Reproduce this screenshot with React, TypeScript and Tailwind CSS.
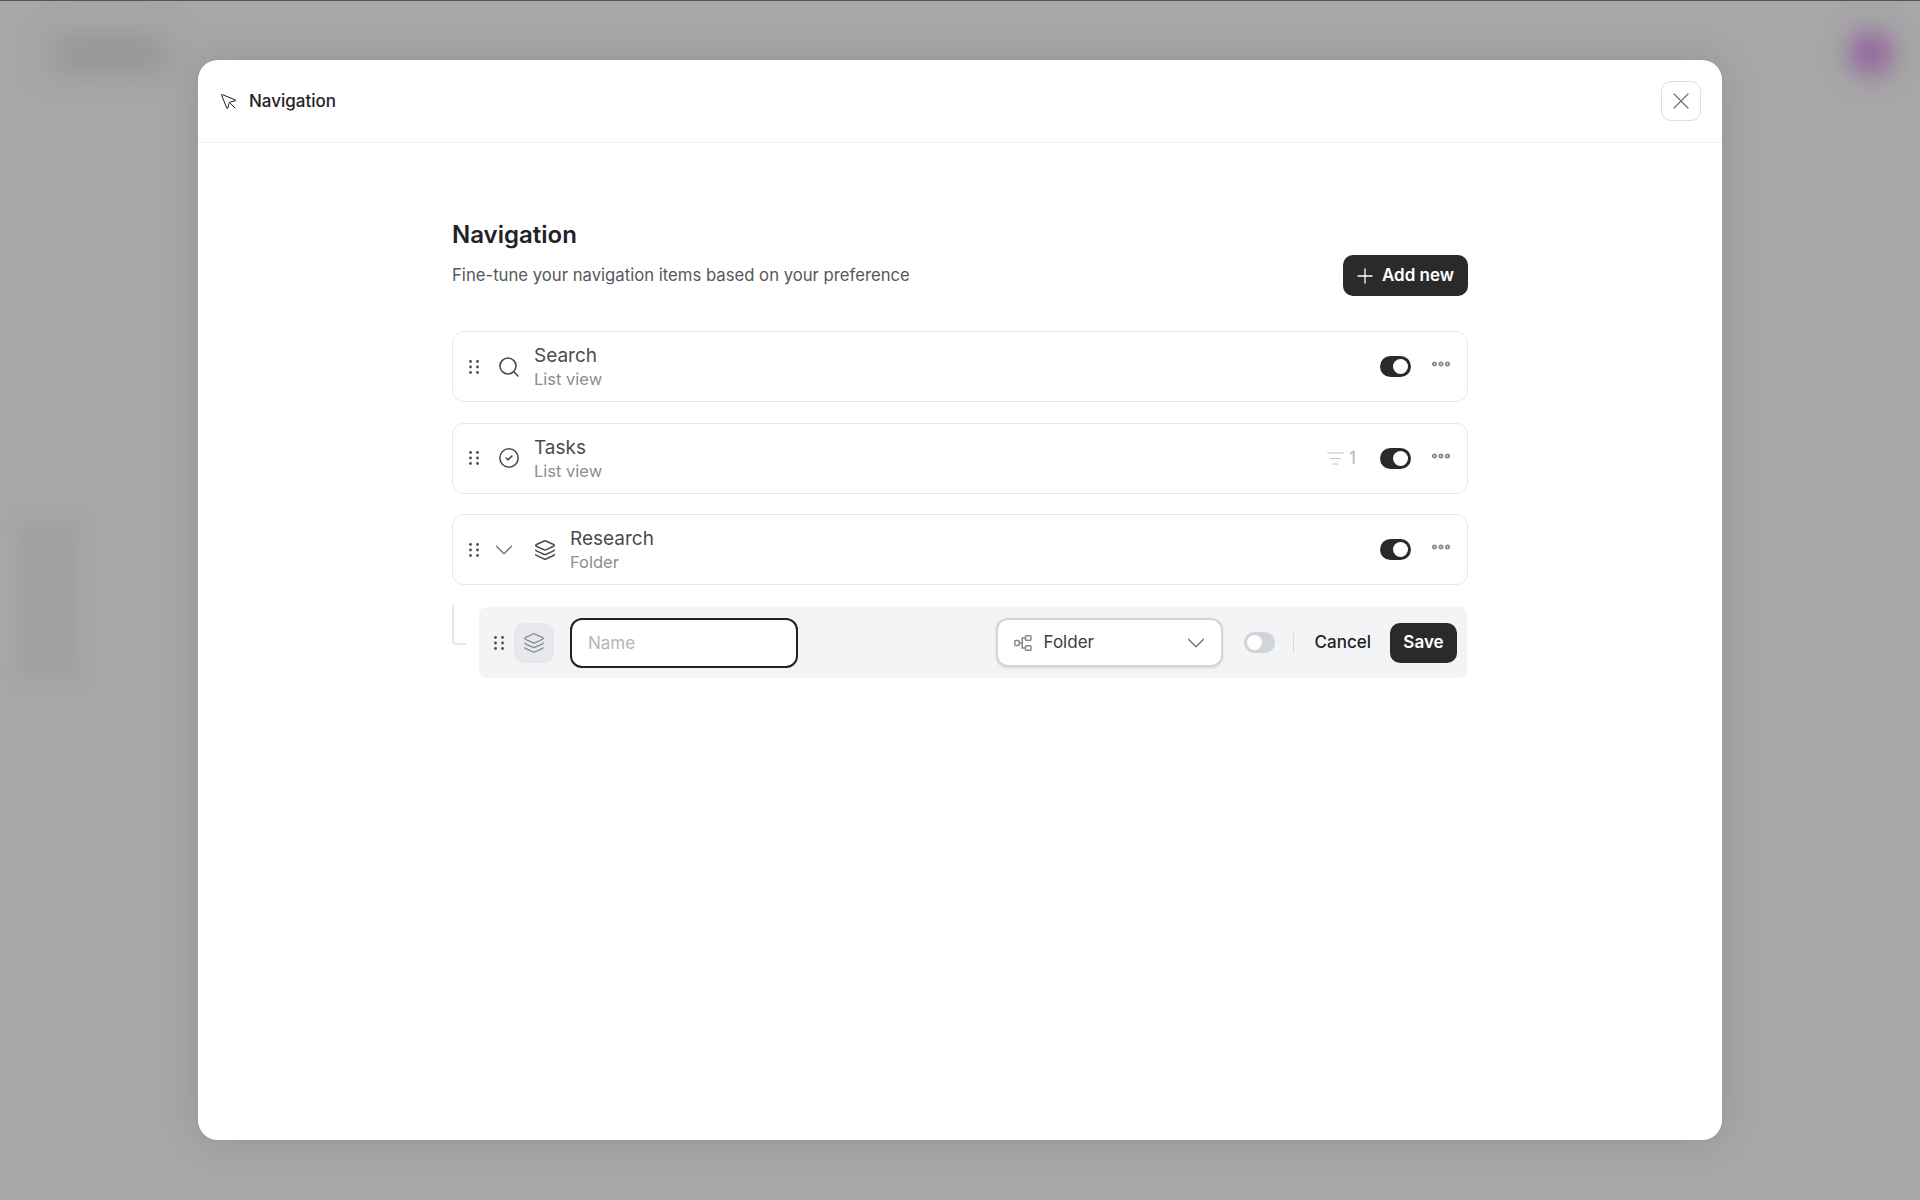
import React from 'react';
import { ChevronDown, CircleCheck, Layers, ListFilter, MousePointer, Plus, Search, X } from 'lucide-react';

const GripDots = () => (
  <svg width="10" height="14" viewBox="0 0 10 14" className="shrink-0 text-[#4b4f55]" fill="currentColor">
    <circle cx="1.5" cy="1.5" r="1.4" />
    <circle cx="8.5" cy="1.5" r="1.4" />
    <circle cx="1.5" cy="7" r="1.4" />
    <circle cx="8.5" cy="7" r="1.4" />
    <circle cx="1.5" cy="12.5" r="1.4" />
    <circle cx="8.5" cy="12.5" r="1.4" />
  </svg>
);

const MoreDots = () => (
  <svg width="20" height="8" viewBox="0 0 20 8" fill="none" stroke="#85898f" strokeWidth="1.8" className="mb-[5px]">
    <circle cx="3.5" cy="4" r="1.7" />
    <circle cx="10" cy="4" r="1.7" />
    <circle cx="16.5" cy="4" r="1.7" />
  </svg>
);

const FolderTree = () => (
  <svg width="18" height="16" viewBox="0 0 18 16" fill="none" stroke="#85898f" strokeWidth="1.5">
    <rect x="0.8" y="5.6" width="4.4" height="4.8" rx="0.8" />
    <rect x="11.5" y="0.8" width="5.5" height="4.4" rx="0.8" />
    <rect x="11.5" y="10.8" width="5.5" height="4.4" rx="0.8" />
    <path d="M5.2 8H8.2V3H11.5M8.2 8V13H11.5" />
  </svg>
);

const Toggle = () => (
  <div className="flex h-[21px] w-[31px] items-center justify-end rounded-full bg-[#2a2a2b] pr-[3px]">
    <div className="h-[15px] w-[15px] rounded-full bg-white" />
  </div>
);

type RowProps = {
  title: string;
  subtitle: string;
  icon: React.ReactNode;
  expandable?: boolean;
  filterCount?: number;
};

const NavRow = ({ title, subtitle, icon, expandable, filterCount }: RowProps) => (
  <div className="flex h-[71px] items-center rounded-xl border border-[#e6e7e9] bg-white pl-4 pr-4">
    <GripDots />
    {expandable && <ChevronDown size={30} strokeWidth={1} className="ml-[10px] text-[#6b7076]" />}
    <div className={expandable ? 'ml-[15px] flex w-[22px] justify-center' : 'ml-[18px] flex w-6 justify-center'}>{icon}</div>
    <div className={expandable ? 'ml-[14px] flex flex-col' : 'ml-[13px] flex flex-col'}>
      <span className="text-[19px] leading-[25px] text-[#4a4c50]">{title}</span>
      <span className="text-[16.5px] leading-[22px] text-[#8b8e93]">{subtitle}</span>
    </div>
    <div className="ml-auto flex items-center">
      {filterCount !== undefined && (
        <div className="mr-6 flex items-center gap-1 text-[#b2b5b9]">
          <ListFilter size={19} strokeWidth={1.1} />
          <span className="text-[17px] leading-none">{filterCount}</span>
        </div>
      )}
      <Toggle />
      <div className="ml-5 flex w-5 items-center">
        <MoreDots />
      </div>
    </div>
  </div>
);

const App = () => {
  return (
    <div className="relative h-[1200px] w-full overflow-hidden bg-[#a7a7a7] font-['Inter',sans-serif]">
      {/* blurred page behind the dialog */}
      <div className="absolute inset-x-0 top-0 h-px bg-[#555]" />
      <div className="absolute left-[50px] top-[40px] h-[28px] w-[120px] rounded-full bg-[#8f8f8f] blur-[16px]" />
      <div className="absolute left-[20px] top-[520px] h-[160px] w-[58px] rounded-lg bg-[#a0a0a0] blur-[8px]" />
      <div className="absolute left-[1848px] top-[30px] h-[46px] w-[46px] rounded-full bg-[#93689e] blur-[12px]" />

      <div className="absolute inset-0 flex items-center justify-center">
        <div className="flex h-[1080px] w-[1524px] flex-col rounded-[20px] bg-white shadow-[0_0_40px_rgba(0,0,0,0.12)]">
          <header className="flex h-[83px] shrink-0 items-center justify-between border-b border-[#eeeff0] pl-[21px] pr-[21px]">
            <div className="flex items-center gap-[10px] pt-[2px]">
              <MousePointer size={20} strokeWidth={1.2} className="text-[#1f1f20]" />
              <span className="text-[17px] font-medium text-[#232325]">Navigation</span>
            </div>
            <button className="flex h-10 w-10 items-center justify-center rounded-[10px] border border-[#dcdde0] bg-white text-[#6f7378]">
              <X size={28} strokeWidth={1.1} />
            </button>
          </header>

          <main className="mx-auto w-[1016px] pt-[74px]">
            <div className="flex items-end justify-between">
              <div>
                <h1 className="text-[24px] font-semibold leading-[36px] text-[#222224]">Navigation</h1>
                <p className="mt-[10px] pb-[9px] text-[16.7px] leading-[24px] text-[#55585c]">
                  Fine-tune your navigation items based on your preference
                </p>
              </div>
              <button className="flex h-[41px] w-[125px] items-center gap-[5px] rounded-[10px] bg-[#2a2a2b] pl-[10px] text-[17px] font-semibold text-white">
                <Plus size={24} strokeWidth={1.3} />
                Add new
              </button>
            </div>

            <div className="mt-[35px] flex flex-col gap-[20.5px]">
              <NavRow title="Search" subtitle="List view" icon={<Search size={24} strokeWidth={1.6} className="text-[#4a4c50]" />} />
              <NavRow
                title="Tasks"
                subtitle="List view"
                filterCount={1}
                icon={<CircleCheck size={22} strokeWidth={1.7} className="text-[#4a4c50]" />}
              />
              <NavRow title="Research" subtitle="Folder" expandable icon={<Layers size={22} strokeWidth={1.7} className="text-[#4a4c50]" />} />
            </div>

            <div className="mt-5 flex items-start">
              <div className="h-[40px] w-[14px] shrink-0 rounded-bl-sm border-b-2 border-l-2 border-[#e6e7e9]" />
              <div className="ml-[13px] mr-px mt-[2px] flex h-[71px] flex-1 items-center rounded-lg bg-[#f2f4f6] pl-[15px] pr-[10px]">
                <GripDots />
                <div className="ml-[10px] flex h-10 w-10 items-center justify-center rounded-[10px] bg-[#e6e8eb]">
                  <Layers size={22} strokeWidth={1.4} className="text-[#85898f]" />
                </div>
                <input
                  placeholder="Name"
                  className="ml-4 h-[50px] w-[228px] rounded-[12px] border-2 border-[#222224] bg-white px-4 text-[17px] outline-none placeholder:text-[#b4b6ba]"
                />
                <div className="ml-auto flex h-[49px] w-[227px] items-center rounded-[12px] border-2 border-[#d3d5d9] bg-white pl-4 pr-[10px] text-[17px] text-[#3b3d40] shadow-[0_1px_3px_rgba(0,0,0,0.12)]">
                  <FolderTree />
                  <span className="ml-3">Folder</span>
                  <ChevronDown size={30} strokeWidth={1} className="ml-auto text-[#6b7076]" />
                </div>
                <div className="ml-[21px] flex h-[21px] w-[31px] items-center rounded-full bg-[#d1d4d9] pl-[3px]">
                  <div className="h-[15px] w-[15px] rounded-full bg-white" />
                </div>
                <div className="ml-[18px] h-5 w-px bg-[#d8dadd]" />
                <button className="ml-[21px] text-[17px] font-medium text-[#232325]">Cancel</button>
                <button className="ml-[19px] flex h-10 w-[67px] items-center justify-center rounded-[10px] bg-[#2a2a2b] text-[17px] font-semibold text-white">
                  Save
                </button>
              </div>
            </div>
          </main>
        </div>
      </div>
    </div>
  );
};

export default App;
